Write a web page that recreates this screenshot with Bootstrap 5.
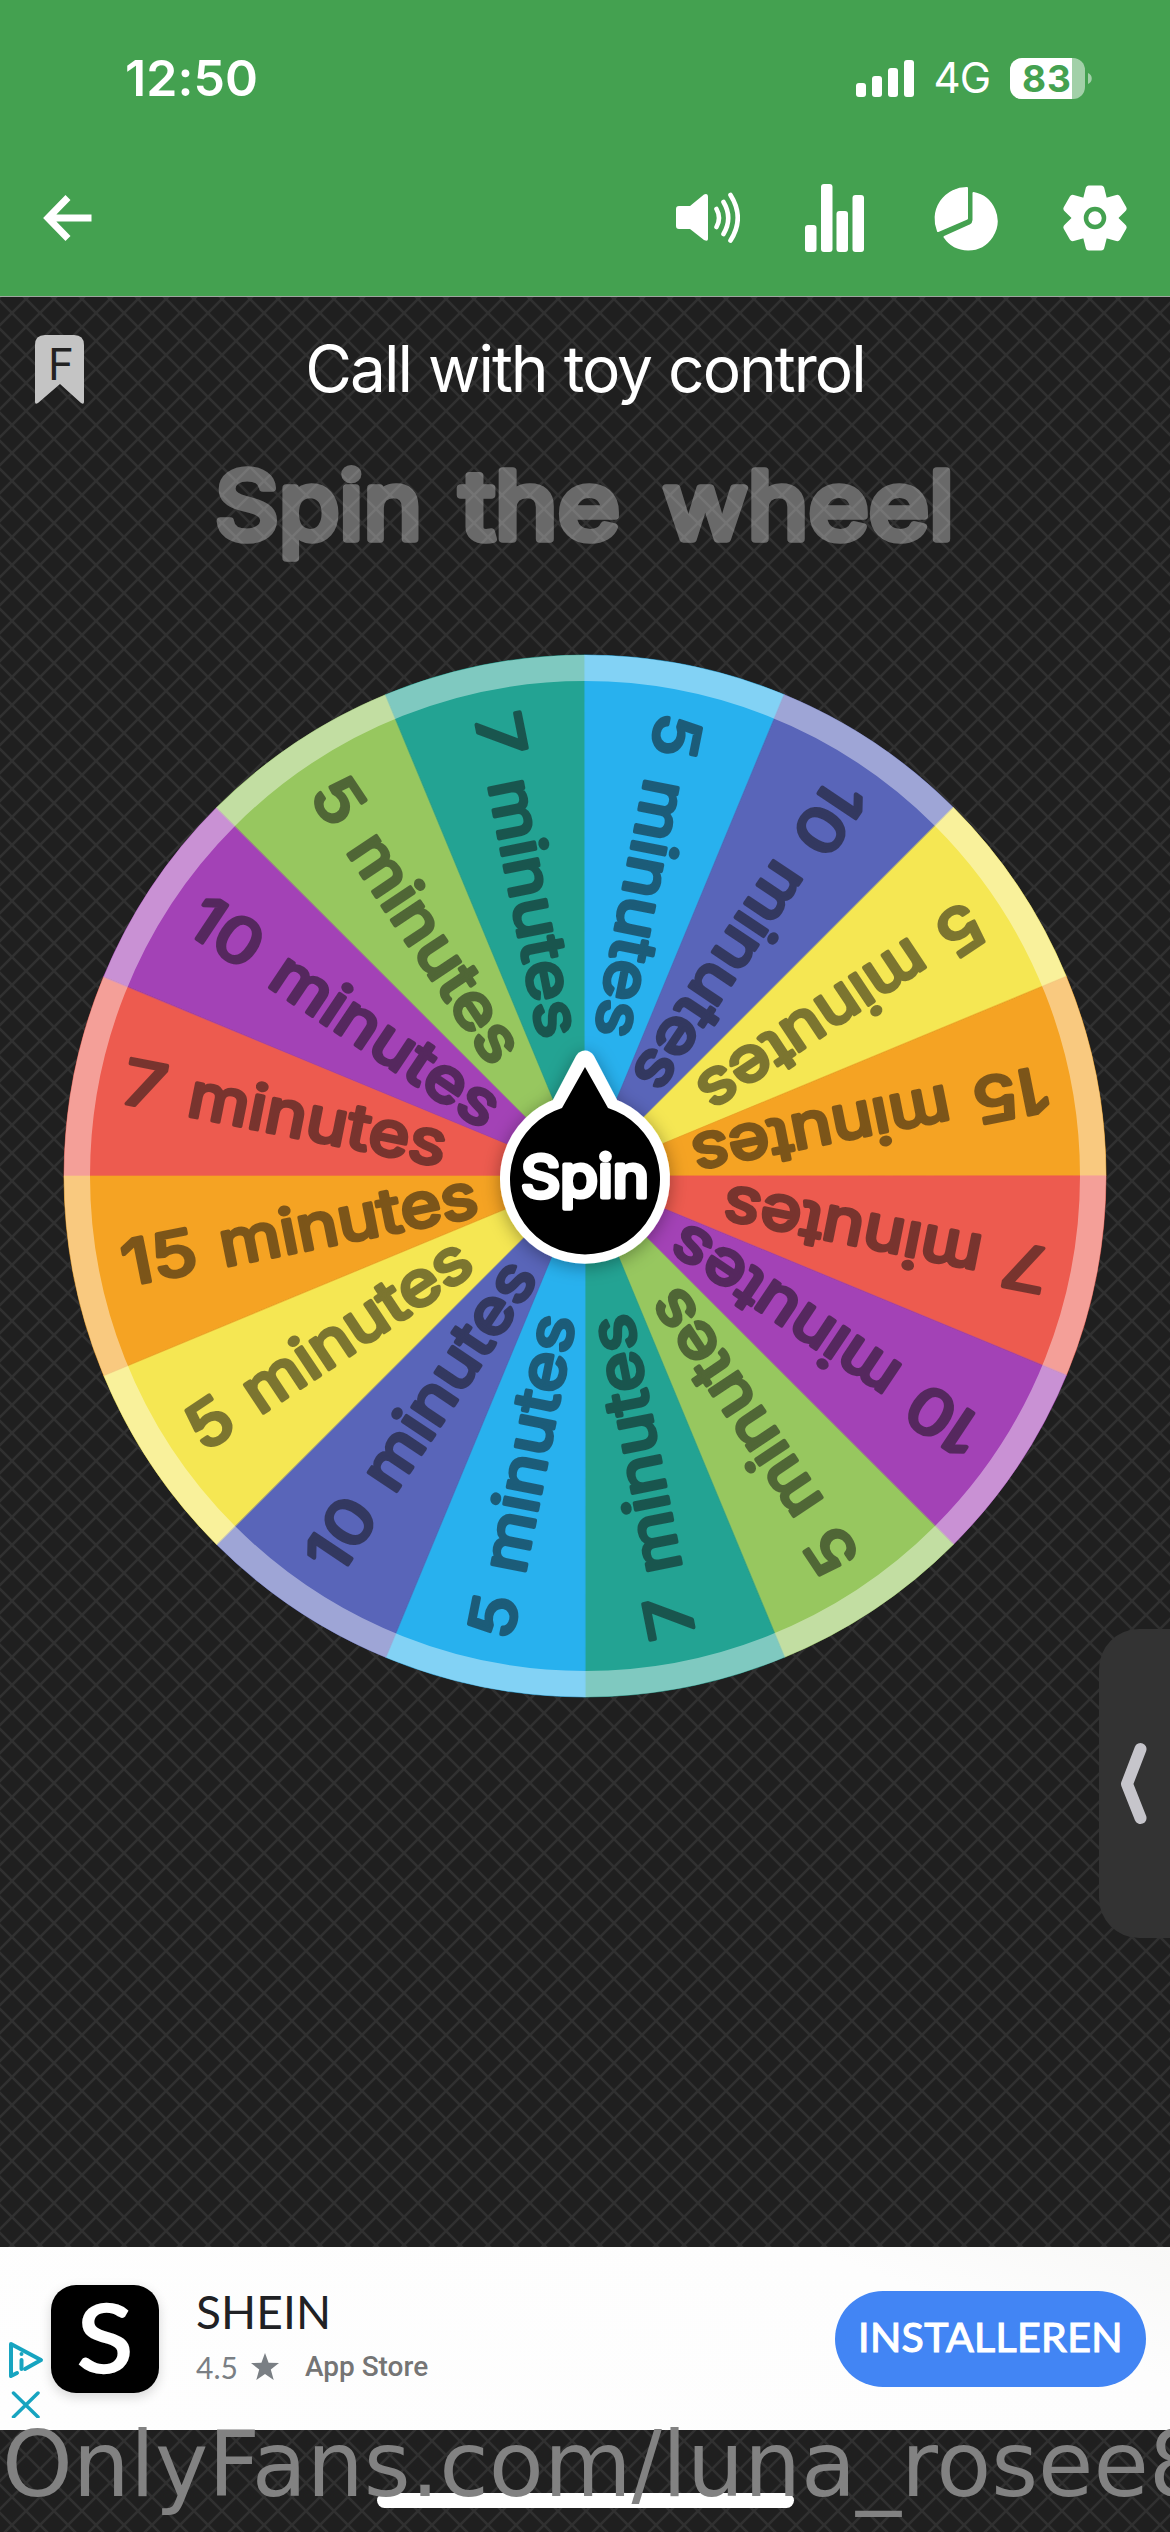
<!DOCTYPE html>
<html lang="nl">
<head>
<meta charset="utf-8">
<meta name="viewport" content="width=device-width, initial-scale=1">
<title>Spin the wheel</title>
<link href="https://cdn.jsdelivr.net/npm/bootstrap@5.3.0/dist/css/bootstrap.min.css" rel="stylesheet">
<style>
  body { width: 1170px; height: 2532px; overflow: hidden; font-family: Inter, "Liberation Sans", sans-serif; color: #fff;
    background: #1f1f1f url("data:image/svg+xml,%3Csvg xmlns='http://www.w3.org/2000/svg' width='28' height='28'%3E%3Cpath d='M-2-2 30 30M-2 30 30-2' stroke='%23303030' stroke-width='2.5'/%3E%3C/svg%3E") 12px 313px; }
  .top-area { height: 297px; background: #44a150; border-bottom: 1px solid #9fa79f; }
  .status-row { height: 156px; padding: 0 77px 0 125px; }
  .clock { font-size: 50px; font-weight: 600; line-height: 1; letter-spacing: .1px; }
  .net { font-size: 42px; line-height: 1; letter-spacing: -1px; }
  .tool-row { height: 124px; padding: 0 43px; }
  .gap-before-bars, .gap-before-gear { margin-left: 65px; }
  .gap-before-pie { margin-left: 70px; }
  .title-row { height: 144px; padding-left: 35px; }
  .wheel-name { font-size: 64px; line-height: 1; letter-spacing: -2px; word-spacing: 1px; }
  .stage { height: 1806px; }
  .round-text { font-family: Inter, sans-serif; stroke-linejoin: round; stroke-linecap: round; }
  .slice-text { font-size: 62px; font-weight: 400; fill: #121212; stroke: #121212; stroke-width: 3.8px; opacity: .53; }
  .side-tab { right: 0; top: 1629px; width: 71px; height: 309px; border-radius: 40px 0 0 40px; background: #333; }
  .ad-bar { height: 183px; background: linear-gradient(200deg, #f8f8f7 0, #fdfdfd 22%, #fefefe 100%); color: #202124; }
  .ad-marks { width: 51px; padding: 93px 0 0 8px; }
  .app-logo { width: 108px; height: 108px; border-radius: 25px; background: #000; box-shadow: 0 4px 12px rgba(0,0,0,.16); }
  .ad-text { margin-left: 37px; margin-top: -8px; }
  .ad-name { font: 400 46px/54px Lato, sans-serif; letter-spacing: .1px; }
  .ad-meta { color: #757575; line-height: 36px; margin-top: 10px; }
  .rate { font: 400 30px/36px Lato, sans-serif; color: #7a7f84; }
  .store { font: 500 28px/36px Roboto, sans-serif; margin-left: 25px; }
  .install { width: 311px; height: 96px; margin-right: 24px; border-radius: 48px; background: #4285f4; color: #fff; border: 0; font: 400 41px/1 Lato, sans-serif; -webkit-text-stroke: 1.2px #fff; letter-spacing: .4px; padding: 0 0 4px; white-space: nowrap; }
  .foot { height: 102px; }
  .home-bar { width: 417px; height: 15px; border-radius: 8px; background: #fff; top: 63px; left: 377px; }
  .handle { font: 90px/1 "DejaVu Sans", sans-serif; color: #828282; left: 2px; top: -10px; white-space: nowrap; }
</style>
</head>
<body class="d-flex flex-column position-relative">
<header class="top-area flex-shrink-0">
  <div class="status-row d-flex align-items-center justify-content-between">
    <div class="clock">12:50</div>
    <div class="d-flex align-items-center">
      <svg width="58" height="37" fill="#fff"><rect y="23" width="10" height="14" rx="3"/><rect x="16" y="16" width="10" height="21" rx="3"/><rect x="32" y="8" width="10" height="29" rx="3"/><rect x="48" width="10" height="37" rx="3"/></svg>
      <span class="net ms-3 me-3 ps-1 pe-1">4G</span>
      <svg width="83" height="41"><defs><clipPath id="bat"><rect width="75" height="41" rx="12"/></clipPath></defs><g clip-path="url(#bat)"><rect width="75" height="41" fill="#fff" opacity=".5"/><rect width="62" height="41" fill="#fff"/></g><path d="M78 15c5 2 5 9 0 11z" fill="#fff" opacity=".5"/><text x="12" y="34" font-family="Inter" font-size="37" font-weight="700" fill="#44a150" textLength="49">83</text></svg>
    </div>
  </div>
  <div class="tool-row d-flex align-items-center">
    <svg class="me-auto" width="49" height="46" fill="none" stroke="#fff" stroke-width="7"><path d="M25 2.500 5 23 25 43.500M4 23H48.500"/></svg>
    <svg width="64" height="68" fill="#fff"><path d="M3 22H14L28 10.500Q32 9 32 13V55Q32 58 28 56L14 45H3Q0 45 0 42V25Q0 22 3 22Z"/><path d="M40.500 25Q45.500 34 40.500 43M47.500 18Q57 34 47.500 50M54.500 11Q69 34 54.500 56.500" fill="none" stroke="#fff" stroke-width="4.600" stroke-linecap="round"/></svg>
    <svg class="gap-before-bars" width="59" height="68" fill="#fff"><rect y="41" width="11.500" height="27" rx="3"/><rect x="16" width="11.500" height="68" rx="3"/><rect x="31.500" y="27" width="11.500" height="41" rx="3"/><rect x="47.500" y="11" width="11.500" height="57" rx="3"/></svg>
    <svg class="gap-before-pie" width="64" height="68" fill="#fff" stroke="#fff" stroke-width="2" stroke-linejoin="round"><path d="M33 4V34.500L4 47A31 31 0 0 1 33 4Z"/><path d="M39.500 9A28.500 28.500 0 1 1 10.500 53L36 41.500Q39.500 39.500 39.500 36Z"/></svg>
    <svg class="gap-before-gear" width="64" height="68" viewBox="-32 -34 64 68"><g fill="#fff"><circle r="23"/><path id="tooth" d="M-12-19-9.500-29Q-9-32.500-6-32.500H6Q9-32.500 9.500-29L12-19Z"/><use href="#tooth" transform="rotate(60)"/><use href="#tooth" transform="rotate(120)"/><use href="#tooth" transform="rotate(180)"/><use href="#tooth" transform="rotate(240)"/><use href="#tooth" transform="rotate(300)"/></g><circle r="9" fill="#fff" stroke="#44a150" stroke-width="4.500"/></svg>
  </div>
</header>
<main class="flex-shrink-0">
  <div class="title-row d-flex align-items-center position-relative">
    <svg width="50" height="70"><path d="M10 1H39Q49 1 49 11V68Q49 71 46 69L25 50 3 69Q0 71 0 68V11Q0 1 10 1Z" fill="#c4c4c4"/><text x="13" y="46" font-family="Inter" font-size="44" fill="#222">F</text></svg>
    <div class="wheel-name position-absolute start-0 w-100 text-center">Call with toy control</div>
  </div>
  <svg class="stage d-block round-text" width="1170" height="1806" viewBox="0 441 1170 1806">
    <defs>
      <path id="wedge" d="M0 0-510.990-101.640A521 521 0 0 0-510.990 101.640Z"/>
      <filter id="glow" x="-30%" y="-30%" width="160%" height="160%"><feDropShadow dx="0" dy="3" stdDeviation="9" flood-color="#000" flood-opacity=".35"/></filter>
    </defs>
    <g font-size="94" font-weight="400" fill="#fff" stroke="#fff" stroke-width="7.500" opacity=".33">
      <text y="539"><tspan x="215" textLength="207" lengthAdjust="spacingAndGlyphs">Spin</tspan> <tspan x="460" textLength="160" lengthAdjust="spacingAndGlyphs">the</tspan> <tspan x="663" textLength="291" lengthAdjust="spacingAndGlyphs">wheel</tspan></text>
    </g>
    <g id="wheel" transform="translate(585 1176)"></g>
    <path filter="url(#glow)" d="M585 1060.500 610 1108A75 75 0 1 1 560 1108Z" fill="#fff" stroke="#fff" stroke-width="20" stroke-linejoin="round"/>
    <path d="M585 1067 608 1108A75 75 0 1 1 562 1108Z" fill="#000"/>
    <text x="521" y="1197" font-size="58" font-weight="400" fill="#fff" stroke="#fff" stroke-width="5" textLength="128" lengthAdjust="spacingAndGlyphs">Spin</text>
  </svg>
</main>
<section class="ad-bar flex-shrink-0 d-flex align-items-center">
  <div class="ad-marks align-self-start flex-shrink-0">
    <svg width="36" height="78" fill="none" stroke="#17a4c0" stroke-width="4" stroke-linejoin="round" stroke-linecap="round"><path d="M9 33 3 36V4L33 20 17 29"/><path d="M13.500 14v.1M13.500 20V29"/><path d="M5.500 53 30 77M30 53 5.500 77" stroke-width="3.500"/></svg>
  </div>
  <div class="app-logo flex-shrink-0 d-flex align-items-center justify-content-center">
    <svg width="108" height="108"><text x="26" y="87" font-family="Lato" font-weight="400" font-size="93" fill="#fff" stroke="#fff" stroke-width="2.500" textLength="56" lengthAdjust="spacingAndGlyphs">S</text></svg>
  </div>
  <div class="ad-text me-auto">
    <div class="ad-name">SHEIN</div>
    <div class="ad-meta d-flex align-items-center"><span class="rate">4.5</span>
      <svg class="ms-2 ps-1" width="34" height="28" viewBox="0 0 30 28" fill="#7a7f84"><path d="m15 0 3.600 9.800 10.400.3-8.200 6.500 2.900 10.400L15 21l-8.700 6 2.900-10.400L1 10.100l10.400-.3z"/></svg>
      <span class="store">App Store</span></div>
  </div>
  <button class="install btn flex-shrink-0">INSTALLEREN</button>
</section>
<footer class="foot position-relative flex-shrink-0">
  <div class="home-bar position-absolute"></div>
  <div class="handle position-absolute">OnlyFans.com/luna_rosee8</div>
</footer>
<div class="side-tab position-absolute">
  <svg width="71" height="309" fill="none" stroke="#c6c5cb" stroke-width="12" stroke-linecap="round" stroke-linejoin="round"><path d="M41.500 120 28 155 41.500 189"/></svg>
</div>
<script src="https://cdn.jsdelivr.net/npm/bootstrap@5.3.0/dist/js/bootstrap.bundle.min.js"></script>
<script>
  // Eight options, repeated twice round the wheel, clockwise from the left.
  const options = [[7, '#ed5b4f'], [10, '#a342b6'], [5, '#97c75f'], [7, '#23a393'], [5, '#28b1ee'], [10, '#5965b9'], [5, '#f5e753'], [15, '#f5a323']];
  const numberWidth = { 5: 43, 7: 43, 10: 75, 15: 75 };
  let slices = '';
  for (let i = 0; i < 16; i++) {
    const [n, color] = options[i % 8];
    const w = numberWidth[n];
    slices += `<g transform="rotate(${11.25 + i * 22.5})"><use href="#wedge" fill="${color}" stroke="${color}" stroke-width=".6"/>` +
      `<text class="slice-text" y="18.500"><tspan x="-471" textLength="${w}" lengthAdjust="spacingAndGlyphs">${n}</tspan> <tspan x="${-471 + w + 24}" textLength="262" lengthAdjust="spacingAndGlyphs">minutes</tspan></text></g>`;
  }
  document.getElementById('wheel').innerHTML = slices + '<circle r="508" fill="none" stroke="#fff" stroke-width="26" opacity=".42"/>';
</script>
</body>
</html>
